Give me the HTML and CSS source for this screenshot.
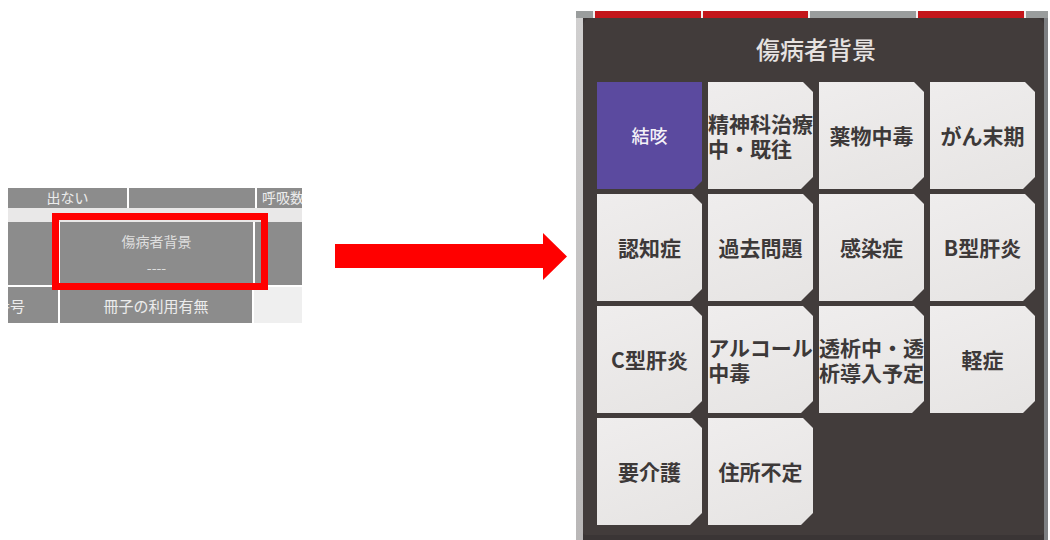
FILE: index.html
```html
<!doctype html>
<html>
<head>
<meta charset="utf-8">
<meta name="viewport" content="width=device-width,initial-scale=1.0" />
<title>傷病者背景</title>
<link rel="stylesheet" href="styles.css">
</head>
<body>
  <div id="page">
    <div class="mini">
      <div class="mini-row row-top">
        <div class="mc w119"><span class="cut">出ない</span></div>
        <div class="mc w126"></div>
        <div class="mc w45 left"><span>呼吸数</span></div>
      </div>
      <div class="mini-gap"></div>
      <div class="mini-row row-mid">
        <div class="mc w50"></div>
        <div class="mc w193 stack"><span>傷病者背景</span><span>----</span></div>
        <div class="mc w47"></div>
      </div>
      <div class="mini-row row-bot">
        <div class="mc w50 left"><span class="tail">番号</span></div>
        <div class="mc w192"><span class="big">冊子の利用有無</span></div>
        <div class="mc w48 blank"></div>
      </div>
      <div class="mark"></div>
    </div>

    <svg class="arrow" width="232" height="47" viewBox="0 0 232 47">
      <polygon points="0,11 208,11 208,0 232,23.5 208,47 208,35 0,35" fill="#ff0000"/>
    </svg>

    <div class="device">
      <div class="tabs">
        <div class="tab grey w19"></div>
        <div class="tab red w108"></div>
        <div class="tab red w105"></div>
        <div class="tab grey w106"></div>
        <div class="tab red w106"></div>
        <div class="tab grey fill"></div>
      </div>
      <div class="device-body">
        <div class="edge-left"></div>
        <div class="modal">
          <div class="modal-title">傷病者背景</div>
          <div class="grid">
            <div class="cell active"><span>結咳</span></div>
            <div class="cell"><span>精神科治療<br>中・既往</span></div>
            <div class="cell"><span>薬物中毒</span></div>
            <div class="cell"><span>がん末期</span></div>
            <div class="cell"><span>認知症</span></div>
            <div class="cell"><span>過去問題</span></div>
            <div class="cell"><span>感染症</span></div>
            <div class="cell"><span>B型肝炎</span></div>
            <div class="cell"><span>C型肝炎</span></div>
            <div class="cell"><span>アルコール<br>中毒</span></div>
            <div class="cell"><span>透析中・透<br>析導入予定</span></div>
            <div class="cell"><span>軽症</span></div>
            <div class="cell"><span>要介護</span></div>
            <div class="cell"><span>住所不定</span></div>
          </div>
        </div>
        <div class="edge-right"></div>
      </div>
    </div>
  </div>
</body>
</html>
```

FILE: styles.css
```css
html, body {
  margin: 0;
  padding: 0;
  background: #fff;
}

body {
  width: 1050px;
  height: 540px;
  overflow: hidden;
  font-family: "Noto Sans CJK JP", "Noto Sans", sans-serif;
}

#page {
  display: flex;
  align-items: flex-start;
  padding-left: 8px;
}

/* small screenshot on the left */

.mini {
  position: relative;
  width: 294px;
  margin-top: 188px;
  background: #fff;
}

.mini-row {
  display: flex;
  gap: 2px;
}

.row-top { height: 20px; }
.row-mid { height: 63px; margin-bottom: 2px; }
.row-bot { height: 36px; }

.mini-gap {
  height: 14px;
  background: #e9e8e8;
}

.mc {
  display: flex;
  align-items: center;
  justify-content: center;
  overflow: hidden;
  background: #8c8c8c;
  color: #ececec;
  font-size: 14px;
  white-space: nowrap;
}

.mc.left { justify-content: flex-start; }
.mc.blank { background: #efefef; }

.w119 { width: 119px; }
.w126 { width: 126px; }
.w45 { width: 45px; }
.w50 { width: 50px; }
.w193 { width: 193px; }
.w47 { width: 47px; }
.w192 { width: 192px; }
.w48 { width: 48px; }

.row-top .mc { align-items: flex-end; }
.row-top .cut { line-height: 16px; margin-bottom: 3px; }
.row-top .left span { padding-left: 5px; margin-bottom: 3px; line-height: 16px; }

.stack {
  flex-direction: column;
  gap: 6px;
  font-size: 14px;
  color: #dedede;
}

.tail {
  margin-left: -13px;
  font-size: 15px;
}

.big { font-size: 15px; }

.mark {
  position: absolute;
  left: 44px;
  top: 25px;
  width: 202px;
  height: 63px;
  border: 7px solid #ff0000;
}

.arrow {
  display: block;
  margin-left: 33px;
  margin-top: 233px;
}

/* photo of the tablet on the right */

.device {
  width: 472px;
  height: 529px;
  margin-left: 9px;
  margin-top: 11px;
  background: #c4c2c2;
}

.tabs {
  display: flex;
  gap: 2px;
  height: 7px;
  background: #f2f2f2;
}

.tab.red { background: #c3161b; }
.tab.grey { background: #9a9d9d; }
.w108 { width: 106px; }
.w105 { width: 105px; }
.w106 { width: 106px; }
.w19 { width: 17px; }
.fill { flex: 1; }

.device-body {
  display: flex;
  height: 522px;
  background: #3a3535;
}

.edge-left {
  width: 7px;
  background: linear-gradient(#d0cfcf, #b9b7b7);
}

.edge-right {
  flex: 1;
  background: #7d7f82;
}

.modal {
  width: 461px;
  height: 517px;
  padding: 0 9px 0 14px;
  background: #423c3b;
  border-radius: 8px 8px 3px 3px;
  box-sizing: border-box;
}

.modal-title {
  height: 64px;
  display: flex;
  align-items: center;
  justify-content: center;
  color: #e6e2e1;
  font-size: 24px;
  font-weight: 500;
  padding-bottom: 3px;
  box-sizing: border-box;
}

.grid {
  display: grid;
  grid-template-columns: repeat(4, 105px);
  grid-auto-rows: 107px;
  gap: 5px 6px;
}

.cell {
  display: flex;
  align-items: center;
  justify-content: center;
  background: linear-gradient(160deg, #efeded, #e6e4e3);
  color: #3d3939;
  font-size: 21px;
  font-weight: 700;
  line-height: 25px;
  white-space: nowrap;
  clip-path: polygon(0 0, calc(100% - 10px) 0, 100% 10px, 100% calc(100% - 12px), calc(100% - 12px) 100%, 0 100%);
}

.cell span {
  display: inline-block;
  text-align: left;
}

.cell.active {
  background: #5b4a9f;
  color: #f4f2f8;
  font-size: 18px;
  font-weight: 500;
  clip-path: polygon(0 0, 100% 0, 100% calc(100% - 8px), calc(100% - 8px) 100%, 0 100%);
}
```
